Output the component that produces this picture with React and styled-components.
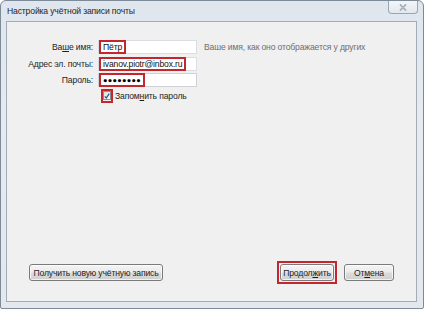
import React from "react";
import styled, { createGlobalStyle } from "styled-components";

const GlobalStyle = createGlobalStyle`
  html, body {
    margin: 0;
    padding: 0;
    background: #ffffff;
  }
  body {
    font-family: "Liberation Sans", "DejaVu Sans", sans-serif;
  }
`;

// window chrome
const Window = styled.div`
  width: 424px;
  height: 309px;
  box-sizing: border-box;
  border: 1px solid #7d8b99;
  border-radius: 6px 6px 2px 2px;
  background: linear-gradient(180deg, #dfe6ee 0%, #e6ebf1 40%, #e2e8ee 100%);
  display: flex;
  flex-direction: column;
  overflow: hidden;
`;

const TitleBar = styled.div`
  height: 20px;
  display: flex;
  align-items: flex-start;
  padding-left: 6px;
`;

const Title = styled.span`
  margin-top: 5px;
  font-size: 8.6px;
  color: #1f1f1f;
  letter-spacing: -0.15px;
`;

const CloseButton = styled.div`
  margin-left: auto;
  margin-right: 5px;
  width: 30px;
  height: 13px;
  box-sizing: border-box;
  border: 1px solid #9aa6b3;
  border-top: none;
  border-radius: 0 0 4px 4px;
  background: linear-gradient(180deg, #f3f6f9 0%, #e2e8ef 100%);
  display: flex;
  align-items: center;
  justify-content: center;
`;

const Client = styled.div`
  flex: 1;
  margin: 0 6px 6px 5px;
  border: 1px solid #a3acb6;
  background: #f0f0f0;
  display: flex;
  flex-direction: column;
  font-size: 8.6px;
  letter-spacing: -0.15px;
  color: #1e1e1e;
`;

// form
const Form = styled.div`
  display: grid;
  grid-template-columns: 86px 99px auto;
  grid-auto-rows: 14px;
  column-gap: 5px;
  row-gap: 2.5px;
  padding-top: 18px;
  align-items: center;
`;

const Label = styled.span`
  text-align: right;
  white-space: nowrap;
`;

const Field = styled.div`
  height: 14px;
  box-sizing: border-box;
  background: #ffffff;
  border: 1px solid ${(p) => (p.$plain ? "#cfd3d8" : "#dadde1")};
  display: flex;
  align-items: stretch;
`;

const Highlight = styled.span`
  display: inline-flex;
  align-items: center;
  box-sizing: border-box;
  border: 2px solid #c4262e;
  padding: 0 ${(p) => p.$pad || 1}px;
  margin: -1px 0 -1px 0;
  white-space: nowrap;
  color: #111;
`;

const Dots = styled.span`
  font-size: 7.4px;
  letter-spacing: 0.3px;
  color: #000;
`;

const Hint = styled.span`
  color: #6f6f6f;
  white-space: nowrap;
  padding-left: 2px;
`;

const Mnemonic = styled.span`
  text-decoration: underline;
`;

const CheckRow = styled.div`
  display: flex;
  align-items: center;
  gap: 2px;
  margin: 1.5px 0 0 94px;
`;

const CheckFrame = styled.span`
  display: inline-flex;
  align-items: center;
  justify-content: center;
  width: 12px;
  height: 14px;
  box-sizing: border-box;
  border: 2px solid #c4262e;
`;

const CheckBox = styled.span`
  width: 8px;
  height: 9px;
  box-sizing: border-box;
  border: 1px solid #8e8f8f;
  background: linear-gradient(135deg, #dcdcdc 0%, #ffffff 100%);
  display: flex;
  align-items: center;
  justify-content: center;
`;

// buttons
const Footer = styled.div`
  margin-top: auto;
  display: flex;
  align-items: center;
  padding: 0 22px 17px 22px;
`;

const RightButtons = styled.div`
  margin-left: auto;
  display: flex;
  align-items: center;
  gap: 7px;
`;

const Button = styled.div`
  width: ${(p) => p.$width}px;
  height: 17px;
  box-sizing: border-box;
  border: 1px solid #7a7a7a;
  border-radius: 3px;
  background: linear-gradient(180deg, #f4f4f4 0%, #ebebeb 48%, #dcdcdc 52%, #cfcfcf 100%);
  box-shadow: inset 0 0 0 1px rgba(255, 255, 255, 0.7);
  display: flex;
  align-items: center;
  justify-content: center;
  color: #1e1e1e;
  white-space: nowrap;
`;

const ButtonHighlight = styled.span`
  display: inline-flex;
  padding: 1px;
  border: 2px solid #c4262e;
`;

export default function App() {
  return (
    <>
      <GlobalStyle />
      <Window>
        <TitleBar>
          <Title>Настройка учётной записи почты</Title>
          <CloseButton>
            <svg width="8" height="7" viewBox="0 0 8 7">
              <path d="M1 0.5 L7 6.5 M7 0.5 L1 6.5" stroke="#8a96a3" strokeWidth="1.6" fill="none" />
              <path d="M1 0.5 L7 6.5 M7 0.5 L1 6.5" stroke="#eef2f6" strokeWidth="0.5" fill="none" />
            </svg>
          </CloseButton>
        </TitleBar>

        <Client>
          <Form>
            <Label>
              Ва<Mnemonic>ш</Mnemonic>е имя:
            </Label>
            <Field>
              <Highlight $pad={2}>Пётр</Highlight>
            </Field>
            <Hint>Ваше имя, как оно отображается у других</Hint>

            <Label>Адрес эл. почты:</Label>
            <Field>
              <Highlight $pad={2}>ivanov.piotr@inbox.ru</Highlight>
            </Field>
            <span />

            <Label>Пароль:</Label>
            <Field $plain>
              <Highlight $pad={2}>
                <Dots>●●●●●●●●</Dots>
              </Highlight>
            </Field>
            <span />
          </Form>

          <CheckRow>
            <CheckFrame>
              <CheckBox>
                <svg width="6" height="6" viewBox="0 0 6 6">
                  <path d="M0.8 3.4 L2.3 5 L5.3 0.6" stroke="#2a4f9a" strokeWidth="1.2" fill="none" />
                </svg>
              </CheckBox>
            </CheckFrame>
            <span>
              Запом<Mnemonic>н</Mnemonic>ить пароль
            </span>
          </CheckRow>

          <Footer>
            <Button $width={134}>Получить новую учётную запись</Button>
            <RightButtons>
              <ButtonHighlight>
                <Button $width={54}>
                  Продол<Mnemonic>ж</Mnemonic>ить
                </Button>
              </ButtonHighlight>
              <Button $width={50}>
                От<Mnemonic>м</Mnemonic>ена
              </Button>
            </RightButtons>
          </Footer>
        </Client>
      </Window>
    </>
  );
}
